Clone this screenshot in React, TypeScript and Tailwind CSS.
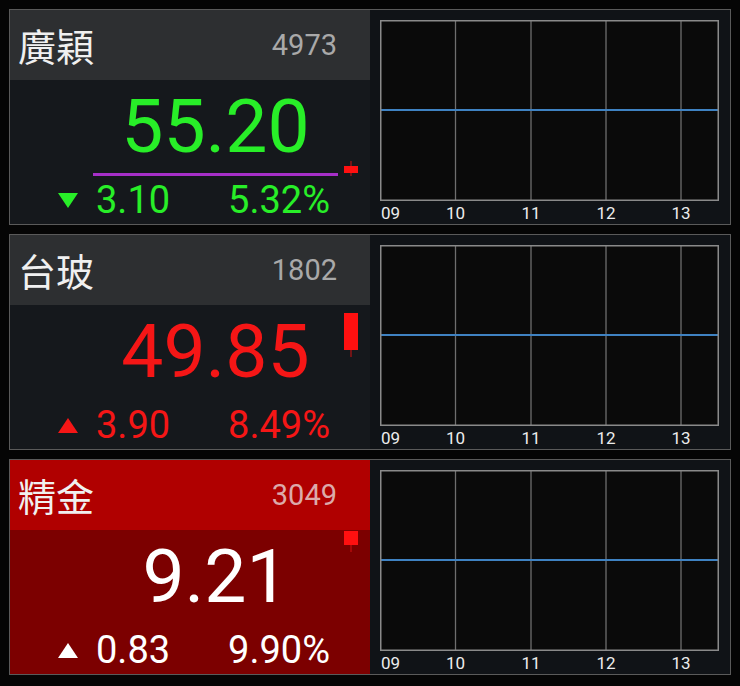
import React from "react";

type Stock = {
  name: string;
  code: string;
  price: string;
  change: string;
  pct: string;
  dir: "up" | "down";
  limit: boolean;
  purple: boolean;
  candle: { top: number; h: number; wTop: number; wBottom: number };
};

const stocks: Stock[] = [
  {
    name: "廣穎",
    code: "4973",
    price: "55.20",
    change: "3.10",
    pct: "5.32%",
    dir: "down",
    limit: false,
    purple: true,
    candle: { top: 86, h: 7, wTop: 81, wBottom: 96 },
  },
  {
    name: "台玻",
    code: "1802",
    price: "49.85",
    change: "3.90",
    pct: "8.49%",
    dir: "up",
    limit: false,
    purple: false,
    candle: { top: 8, h: 37, wTop: 8, wBottom: 52 },
  },
  {
    name: "精金",
    code: "3049",
    price: "9.21",
    change: "0.83",
    pct: "9.90%",
    dir: "up",
    limit: true,
    purple: false,
    candle: { top: 1, h: 14, wTop: 1, wBottom: 22 },
  },
];

const numFont = { fontFamily: "Roboto, 'Liberation Sans', sans-serif" };

function Triangle({ dir, color }: { dir: "up" | "down"; color: string }) {
  return (
    <svg width="20" height="17" viewBox="0 0 20 17" className="shrink-0">
      {dir === "up" ? (
        <polygon points="10,1 20,16 0,16" fill={color} />
      ) : (
        <polygon points="0,1 20,1 10,16" fill={color} />
      )}
    </svg>
  );
}

function Chart() {
  const xs = [75.5, 151, 226, 301];
  const labels = [
    { t: "09", x: 0, align: "left" },
    { t: "10", x: 75.5 },
    { t: "11", x: 151 },
    { t: "12", x: 226 },
    { t: "13", x: 301 },
  ];
  return (
    <div className="flex-1 bg-[#101317] pl-[10px] pt-[10px] pr-[11px]">
      <div className="relative w-[339px]">
        <svg width="339" height="181" viewBox="0 0 339 181" className="block">
          <rect x="0" y="0" width="339" height="181" fill="#0a0a0a" />
          {xs.map((x) => (
            <line key={x} x1={x} y1="0" x2={x} y2="181" stroke="#6e6e6e" strokeWidth="1.3" />
          ))}
          <line x1="0" y1="90" x2="339" y2="90" stroke="#3f82c2" strokeWidth="2" />
          <rect x="0.75" y="0.75" width="337.5" height="179.5" fill="none" stroke="#8a8a8a" strokeWidth="1.5" />
        </svg>
        <div className="relative h-[23px] text-[17px] leading-none text-[#ececec]" style={numFont}>
          {labels.map((l) =>
            l.align === "left" ? (
              <span key={l.t} className="absolute left-[1px] top-[4px]">
                {l.t}
              </span>
            ) : (
              <span
                key={l.t}
                className="absolute top-[4px] -translate-x-1/2"
                style={{ left: l.x }}
              >
                {l.t}
              </span>
            )
          )}
        </div>
      </div>
    </div>
  );
}

function Card({ s }: { s: Stock }) {
  const color = s.limit ? "#ffffff" : s.dir === "up" ? "#f51616" : "#28ee28";
  return (
    <div className="flex h-[216px] border border-[#5a5a5a]">
      <div className="flex w-[360px] flex-col">
        <div
          className={`flex h-[70px] items-center justify-between pl-[8px] pr-[33px] ${
            s.limit ? "bg-[#b00000]" : "bg-[#2d2f31]"
          }`}
        >
          <span
            className="text-[38px] leading-none text-[#f0f0f0]"
            style={{ fontFamily: "'Noto Sans CJK TC', 'Noto Sans', sans-serif" }}
          >
            {s.name}
          </span>
          <span
            className={`text-[29px] leading-none ${s.limit ? "text-[#dcaaaa]" : "text-[#a9a9a9]"}`}
            style={numFont}
          >
            {s.code}
          </span>
        </div>
        <div
          className={`relative flex flex-1 flex-col ${s.limit ? "bg-[#7c0000]" : "bg-[#15181c]"}`}
        >
          <div className="ml-[83px] mt-[9px] w-[245px] text-center">
            <div className="text-[75px] leading-[75px]" style={{ ...numFont, color }}>
              {s.price}
            </div>
            <div className={`mt-[9px] h-[3px] ${s.purple ? "bg-[#a62fc8]" : "bg-transparent"}`} />
          </div>
          <div
            className="mt-[6px] flex items-center pl-[48px] pr-[40px] text-[38px] leading-[36px]"
            style={{ ...numFont, color }}
          >
            <Triangle dir={s.dir} color={color} />
            <span className="ml-[18px]">{s.change}</span>
            <span className="ml-auto">{s.pct}</span>
          </div>
          <svg
            width="16"
            height="100"
            className="absolute left-[333px] top-0"
            viewBox="0 0 16 100"
          >
            <line
              x1="8"
              y1={s.candle.wTop}
              x2="8"
              y2={s.candle.wBottom}
              stroke="#d01010"
              strokeWidth="1"
            />
            <rect x="1" y={s.candle.top} width="14" height={s.candle.h} fill="#ff1010" />
          </svg>
        </div>
      </div>
      <Chart />
    </div>
  );
}

export default function App() {
  return (
    <div className="flex min-h-screen flex-col gap-[9px] bg-[#050505] px-[9px] pt-[9px]">
      {stocks.map((s) => (
        <Card key={s.code} s={s} />
      ))}
    </div>
  );
}
